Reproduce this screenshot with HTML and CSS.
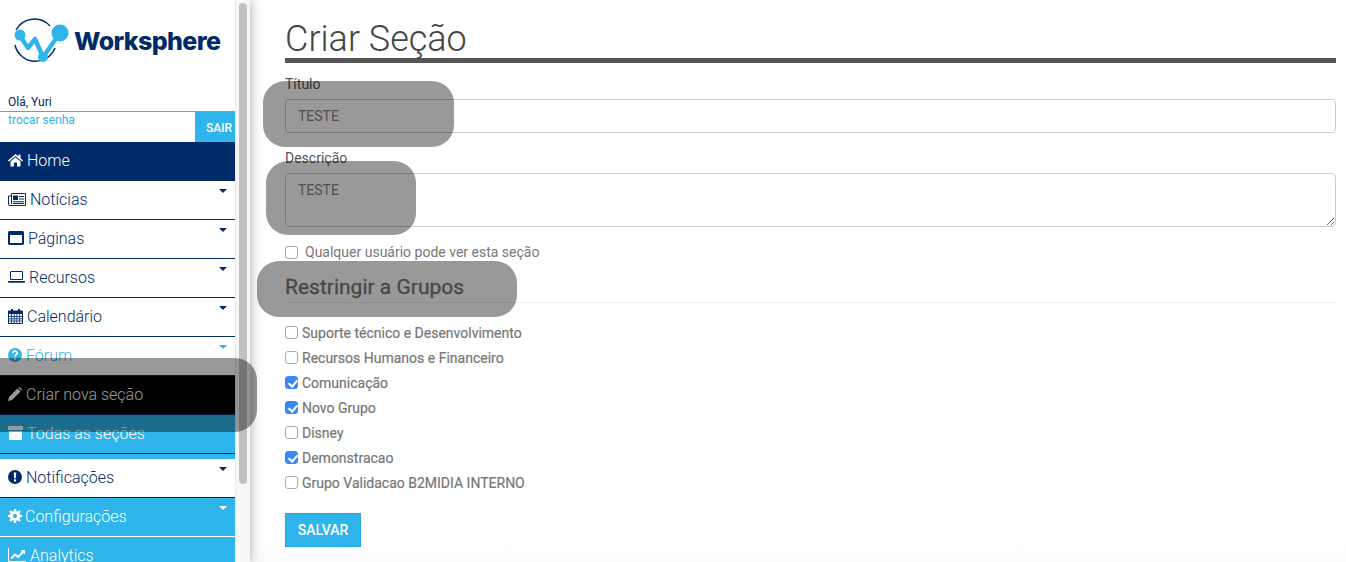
FILE: index.html
```html
<!DOCTYPE html>
<html lang="pt-BR">

<head>
    <meta charset="UTF-8">
    <meta name="viewport" content="width=device-width, initial-scale=1.0">
    <title>Criar Seção</title>
    <link rel="stylesheet" href="styles.css">
</head>

<body>
    <div class="sidebar-wrap">
        <aside class="sidebar">
            <div class="logo">
                <svg class="logo-mark" width="60" height="50" viewBox="0 0 60 50">
                    <path d="M5 15 A21 21 0 0 1 39 11" fill="none" stroke="#012a69" stroke-width="1.500" />
                    <path d="M4 30 A21 21 0 0 0 44 33" fill="none" stroke="#012a69" stroke-width="1.500" />
                    <path d="M9 21 L17 33 L24 24 L32 42 L49 18" fill="none" stroke="#2fb5ec" stroke-width="4.500" stroke-linejoin="round" />
                    <circle cx="9" cy="20" r="5.500" fill="#2fb5ec" />
                    <circle cx="49" cy="18" r="8.500" fill="#2fb5ec" />
                    <circle cx="32" cy="42" r="5" fill="#2fb5ec" />
                </svg>
                <span class="logo-text">Worksphere</span>
            </div>
            <div class="user-name">Olá, Yuri</div>
            <div class="user-row">
                <a class="change-pass">trocar senha</a>
                <button class="logout">SAIR</button>
            </div>
            <nav>
                <div class="item home">
                    <svg class="ico" width="15" height="14" viewBox="0 0 15 14"><path d="M7.500 1 L0 7.500 L1 8.500 L7.500 3 L14 8.500 L15 7.500 L12.500 5.300 V1.500 H10.500 V3.500 Z M2.500 8.500 V13.500 H6 V9.500 H9 V13.500 H12.500 V8.500 L7.500 4.200 Z" fill="currentColor" /></svg>
                    Home
                </div>
                <div class="item has-sub">
                    <svg class="ico" width="18" height="13" viewBox="0 0 18 13"><path d="M3.500 .5 H17.500 V12.500 H2 A1.500 1.500 0 0 1 .5 11 V3 H3.500 Z M3.500 3 V11" fill="none" stroke="currentColor" /><path d="M5 2.500 H10 V7 H5 Z M11 3 H16 V4 H11 Z M11 5.500 H16 V6.500 H11 Z M5 8.200 H16 V9.200 H5 Z M5 10 H16 V11 H5 Z" fill="currentColor" /></svg>
                    Notícias
                </div>
                <div class="item has-sub">
                    <svg class="ico" width="16" height="14" viewBox="0 0 16 14"><path d="M1.500 0 H14.500 A1.500 1.500 0 0 1 16 1.500 V12.500 A1.500 1.500 0 0 1 14.500 14 H1.500 A1.500 1.500 0 0 1 0 12.500 V1.500 A1.500 1.500 0 0 1 1.500 0 Z M2 4 V12 H14 V4 Z" fill="currentColor" fill-rule="evenodd" /></svg>
                    Páginas
                </div>
                <div class="item has-sub">
                    <svg class="ico" width="17" height="12" viewBox="0 0 17 12"><path d="M3 .5 H14 A.5 .5 0 0 1 14.500 1 V8.500 H2.500 V1 A.5 .5 0 0 1 3 .5 Z" fill="none" stroke="currentColor" /><path d="M0 10 H17 V10.800 A1 1 0 0 1 16 11.800 H1 A1 1 0 0 1 0 10.800 Z" fill="currentColor" /></svg>
                    Recursos
                </div>
                <div class="item has-sub">
                    <svg class="ico" width="15" height="16" viewBox="0 0 15 16"><path d="M1 2.500 H3 V1 H5 V2.500 H10 V1 H12 V2.500 H14 A1 1 0 0 1 15 3.500 V15 A1 1 0 0 1 14 16 H1 A1 1 0 0 1 0 15 V3.500 A1 1 0 0 1 1 2.500 Z" fill="currentColor" /><path d="M1 6 H14 V15 H1 Z" fill="#fff" /><path d="M1 8.500 H14 M1 10.800 H14 M1 13 H14 M3.500 6 V15 M6.200 6 V15 M8.900 6 V15 M11.600 6 V15" stroke="currentColor" stroke-width=".8" /></svg>
                    Calendário
                </div>
                <div class="item has-sub forum">
                    <svg class="ico" width="14" height="14" viewBox="0 0 14 14"><circle cx="7" cy="7" r="7" fill="currentColor" /><path d="M4.700 5.300 A2.300 2 0 1 1 7.800 7 Q7 7.400 7 8.400" fill="none" stroke="#fff" stroke-width="1.600" /><rect x="6" y="9.700" width="2" height="2" fill="#fff" /></svg>
                    Fórum
                </div>
                <div class="item active">
                    <svg class="ico" width="14" height="14" viewBox="0 0 14 14"><path d="M0 14 L1 10 L9.500 1.500 L12.500 4.500 L4 13 Z M10.300 .7 Q11 0 11.700 .3 L13.700 2.300 Q14 3 13.300 3.700 Z" fill="currentColor" /></svg>
                    Criar nova seção
                </div>
                <div class="item sub-last">
                    <svg class="ico" width="15" height="14" viewBox="0 0 15 14"><path d="M0 0 H15 V4 H0 Z M1 5 H14 V14 H1 Z" fill="currentColor" /></svg>
                    Todas as seções
                </div>
                <div class="item has-sub notif">
                    <svg class="ico" width="14" height="14" viewBox="0 0 14 14"><circle cx="7" cy="7" r="7" fill="currentColor" /><path d="M5.800 2.500 H8.200 L7.900 8.300 H6.100 Z" fill="#fff" /><rect x="6" y="9.300" width="2" height="2.200" fill="#fff" /></svg>
                    Notificações
                </div>
                <div class="item has-sub blue">
                    <svg class="ico ico-cog" width="14" height="14" viewBox="0 0 14 14"><circle cx="7" cy="7" r="3.600" fill="none" stroke="currentColor" stroke-width="3" /><path d="M7 0 V14 M0 7 H14 M2 2 L12 12 M12 2 L2 12" stroke="currentColor" stroke-width="2.400" stroke-dasharray="2.800 8.800" /></svg>
                    Configurações
                </div>
                <div class="item blue">
                    <svg class="ico" width="18" height="14" viewBox="0 0 18 14"><path d="M.5 0 V13.500 H18" fill="none" stroke="currentColor" /><path d="M3 10.500 L7 6.500 L10 9 L16 3" fill="none" stroke="currentColor" stroke-width="2" /><path d="M12.500 2 H17 V6.500 Z" fill="currentColor" /></svg>
                    Analytics
                </div>
            </nav>
        </aside>
        <div class="scroll-track">
            <div class="scroll-thumb"></div>
        </div>
    </div>

    <main class="content">
        <h1>Criar Seção</h1>
        <form>
            <label class="field-label" for="titulo">Título</label>
            <input class="field" id="titulo" type="text" value="TESTE">

            <label class="field-label" for="descricao">Descrição</label>
            <textarea class="field area" id="descricao">TESTE</textarea>

            <label class="check-public"><input type="checkbox">Qualquer usuário pode ver esta seção</label>

            <h3>Restringir a Grupos</h3>

            <div class="groups">
                <label><input type="checkbox">Suporte técnico e Desenvolvimento</label>
                <label><input type="checkbox">Recursos Humanos e Financeiro</label>
                <label><input type="checkbox" checked>Comunicação</label>
                <label><input type="checkbox" checked>Novo Grupo</label>
                <label><input type="checkbox">Disney</label>
                <label><input type="checkbox" checked>Demonstracao</label>
                <label><input type="checkbox">Grupo Validacao B2MIDIA INTERNO</label>
            </div>

            <button class="save" type="button">SALVAR</button>
        </form>
    </main>

    <!-- tarjas cinza por cima da captura -->
    <div class="blob blob-titulo"></div>
    <div class="blob blob-descricao"></div>
    <div class="blob blob-grupos"></div>
    <div class="blob blob-menu"></div>
</body>

</html>
```

FILE: styles.css
```css
* {
    box-sizing: border-box;
}

html,
body {
    height: 100%;
}

body {
    font-family: Roboto, "Liberation Sans", sans-serif;
    margin: 0;
    padding: 0;
    height: 562px;
    overflow: hidden;
    display: flex;
    position: relative;
    background: #fff;
}

.sidebar-wrap {
    display: flex;
    flex: none;
    height: 100%;
    box-shadow: 0 0 12px rgba(0, 0, 0, 0.35);
    position: relative;
}

.sidebar {
    width: 235px;
    height: 100%;
    overflow: hidden;
    background: #fff;
}

.scroll-track {
    width: 15px;
    background: #f7f7f7;
    border-left: 1px solid #eaeaea;
    padding: 3px 3px 0 3px;
}

.scroll-thumb {
    width: 8px;
    height: 481px;
    background: #c1c1c1;
    border-radius: 4px;
}

.logo {
    height: 94px;
    display: flex;
    align-items: flex-start;
    padding: 15px 0 0 11px;
}

.logo-mark {
    flex: none;
}

.logo-text {
    font-family: Inter, "Liberation Sans", sans-serif;
    font-weight: 800;
    font-size: 25px;
    letter-spacing: -0.6px;
    color: #012a69;
    margin: 11px 0 0 3px;
}

.user-name {
    height: 17px;
    padding: 1px 0 0 8px;
    font-size: 12px;
    line-height: 15px;
    color: #012a69;
}

.user-row {
    display: flex;
    height: 31px;
    border-top: 1px solid #2fb5ec;
}

.change-pass {
    flex: 1;
    padding-left: 8px;
    font-size: 12px;
    line-height: 17px;
    color: #2fb5ec;
}

.logout {
    width: 40px;
    border: 0;
    padding: 2px 0 0 8px;
    background: #2fb5ec;
    color: #fff;
    font-family: inherit;
    font-size: 12px;
    font-weight: 500;
}

.item {
    height: 39px;
    padding: 0 0 2px 8px;
    display: flex;
    align-items: center;
    gap: 4px;
    font-size: 16px;
    font-weight: 300;
    color: #012a69;
    border-bottom: 1px solid #012a69;
    position: relative;
}

.ico-cog {
    margin-right: -1px;
}

.has-sub::after {
    content: "";
    position: absolute;
    right: 8px;
    top: 8px;
    border-left: 4px solid transparent;
    border-right: 4px solid transparent;
    border-top: 4px solid currentColor;
}

.home {
    background: #012a69;
    color: #fff;
}

.forum {
    color: #2fb5ec;
}

.active {
    background: #000;
    color: #fff;
}

.sub-last {
    background: #2fb5ec;
    color: #fff;
    margin-bottom: 5px;
    box-shadow: 0 5px 0 #2fb5ec;
}

.blue {
    background: #2fb5ec;
    color: #fff;
    border-bottom-color: #fff;
}

.content {
    flex: 1;
    min-width: 0;
    padding: 0 10px 0 35px;
    color: #555;
    font-size: 14px;
    background: linear-gradient(to top, #fbfbfb, #fff 16px);
}

h1 {
    margin: 0 0 13px 0;
    height: 63px;
    padding-top: 18px;
    font-size: 36px;
    line-height: 42px;
    font-weight: 300;
    color: #444;
    border-bottom: 5px solid #555;
}

.field-label {
    display: block;
    height: 23px;
    line-height: 16px;
    color: #555;
}

.field {
    display: block;
    width: 100%;
    height: 34px;
    margin-bottom: 17px;
    padding: 6px 12px;
    border: 1px solid #ccc;
    border-radius: 4px;
    font-family: inherit;
    font-size: 14px;
    line-height: 20px;
    color: #888;
}

.area {
    height: 54px;
}

.check-public {
    display: flex;
    align-items: center;
    height: 16px;
    color: #777;
}

h3 {
    margin: 13px 0 0 0;
    height: 30px;
    line-height: 28px;
    font-size: 21px;
    font-weight: 400;
    color: #777;
    -webkit-text-stroke: 0.3px #777;
    border-bottom: 1px solid #eee;
}

.groups {
    margin-top: 17px;
    display: flex;
    flex-direction: column;
}

.groups label {
    display: flex;
    align-items: center;
    height: 25px;
    font-weight: 400;
    color: #777;
    -webkit-text-stroke: 0.2px #777;
}

input[type="checkbox"] {
    appearance: none;
    position: relative;
    flex: none;
    width: 13px;
    height: 13px;
    margin: 0 4px 0 0;
    background: #fff;
    border: 1px solid #a8a8a8;
    border-radius: 3px;
}

input[type="checkbox"]:checked {
    background: #3b88f5;
    border-color: #3b88f5;
}

input[type="checkbox"]:checked::after {
    content: "";
    position: absolute;
    left: 3.5px;
    top: 1px;
    width: 4px;
    height: 7px;
    border-right: 2px solid #fff;
    border-bottom: 2px solid #fff;
    transform: rotate(40deg);
}

.check-public input[type="checkbox"] {
    margin-right: 7px;
}

.save {
    display: block;
    margin-top: 18px;
    width: 76px;
    height: 34px;
    background: #2fb5ec;
    border: 1px solid #1fa8e0;
    color: #fff;
    font-family: inherit;
    font-size: 14px;
    font-weight: 500;
    padding: 0;
}

.blob {
    position: absolute;
    background: rgba(0, 0, 0, 0.4);
    border-radius: 22px;
}

.blob-titulo {
    left: 263px;
    top: 81px;
    width: 191px;
    height: 66px;
}

.blob-descricao {
    left: 266px;
    top: 161px;
    width: 150px;
    height: 74px;
}

.blob-grupos {
    left: 257px;
    top: 261px;
    width: 260px;
    height: 56px;
}

.blob-menu {
    left: -20px;
    top: 358px;
    width: 277px;
    height: 74px;
}
```
